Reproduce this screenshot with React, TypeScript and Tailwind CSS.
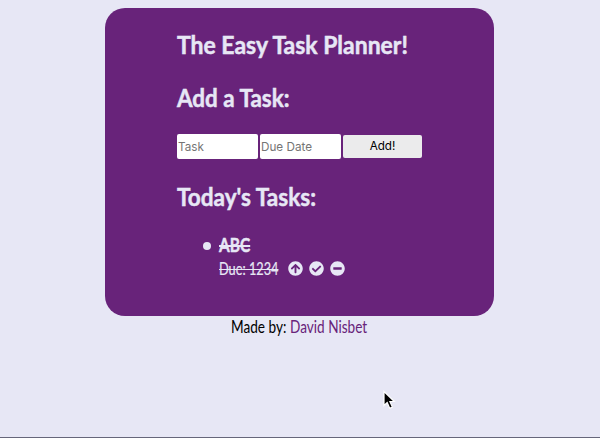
import { FaArrowCircleUp, FaCheckCircle, FaMinusCircle } from "react-icons/fa";

const heading =
  "w-fit origin-left whitespace-nowrap font-['Lato',sans-serif] text-[25.5px] font-bold leading-8 [-webkit-text-stroke:0.5px_#e7e7f5]";

function TaskForm() {
  const field =
    "h-[25px] w-[81px] rounded-[2px] bg-white pl-px font-['Inter',sans-serif] text-[11.7px] text-black placeholder:text-[#757575] outline-none";
  return (
    <form className="mt-[21px] flex items-center" onSubmit={(e) => e.preventDefault()}>
      <input className={field} placeholder="Task" />
      <input className={`ml-[2px] ${field}`} placeholder="Due Date" />
      <button className="ml-[2px] h-[23px] w-[79px] rounded-[2px] bg-[#ebebec] pt-px font-['Inter',sans-serif] text-[11.7px] text-black">
        Add!
      </button>
    </form>
  );
}

function TaskItem() {
  return (
    <li className="mt-[22px] flex pl-[26px]">
      <span className="mt-[8px] mr-[8px] size-2 shrink-0 rounded-full bg-[#e7e7f5]" />
      <div className="font-['Lato',sans-serif]">
        <div className="w-fit origin-left scale-x-[0.86] text-[18px] font-bold leading-[23px] line-through decoration-[1.5px] [-webkit-text-stroke:0.4px_#e7e7f5]">
          ABC
        </div>
        <div className="flex items-center leading-[23px]">
          <div className="w-[68.5px]">
            <span className="inline-block origin-left scale-x-[0.75] whitespace-nowrap text-[17px] line-through decoration-[1px] [-webkit-text-stroke:0.2px_#e7e7f5]">
              Due: 1234
            </span>
          </div>
          <div className="flex gap-[6px] text-[15px]">
            <FaArrowCircleUp />
            <FaCheckCircle />
            <FaMinusCircle />
          </div>
        </div>
      </div>
    </li>
  );
}

export default function App() {
  return (
    <div className="relative flex h-[438px] w-[600px] flex-col overflow-hidden border-b border-[#66667a] bg-[#e7e7f5] pt-[7.5px]">
      <main className="ml-[104.5px] h-[308px] w-[389.5px] shrink-0 rounded-[20px] bg-[#68237a] pt-[20.5px] pl-[72.5px] text-[#e7e7f5]">
        <h2 className={`${heading} scale-x-[0.9]`}>The Easy Task Planner!</h2>
        <h2 className={`${heading} mt-[21px] scale-x-[0.88]`}>Add a Task:</h2>
        <TaskForm />
        <h2 className={`${heading} mt-[21px] scale-x-[0.885]`}>Today's Tasks:</h2>
        <ul>
          <TaskItem />
        </ul>
      </main>
      <footer className="ml-[231px] flex h-[22px] items-center font-['Lato',sans-serif] text-[17px] leading-[22px] whitespace-nowrap text-black">
        <span className="w-[59px]">
          <span className="inline-block origin-left scale-x-[0.8]">Made by:</span>
        </span>
        <a className="inline-block origin-left scale-x-[0.8] text-[#68237a]">David Nisbet</a>
      </footer>
      <svg className="absolute top-[390px] left-[382px]" width="14" height="21" viewBox="0 0 14 21">
        <path
          d="M2 1.5v14l3.2-3 2.5 5.8 2.7-1.2-2.5-5.6h4.4z"
          fill="#000"
          stroke="#fff"
          strokeWidth="1.2"
        />
      </svg>
    </div>
  );
}
